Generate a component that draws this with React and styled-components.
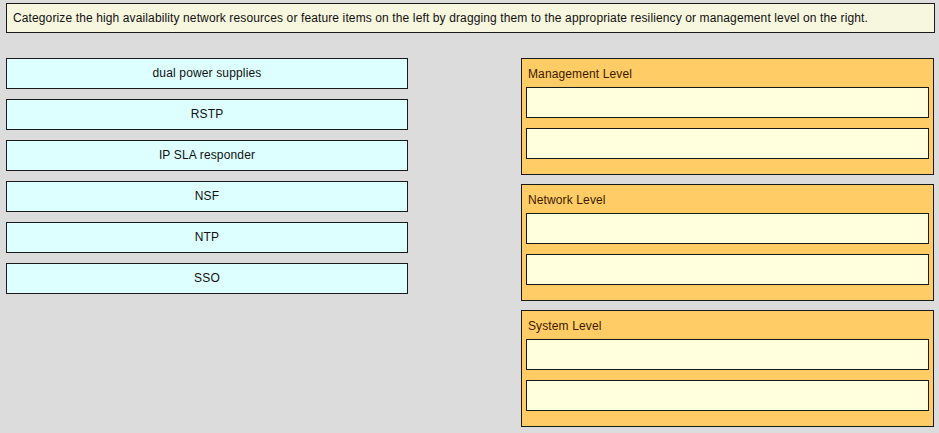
import React from "react";
import styled, { createGlobalStyle } from "styled-components";

const Global = createGlobalStyle`
  html, body { margin: 0; padding: 0; background: #dcdcdc; }
  body { font-family: "Liberation Sans", Arial, sans-serif; }
`;

const Page = styled.div`
  width: 939px;
  height: 433px;
  box-sizing: border-box;
  padding: 3px 5px 0 6px;
  background: #dcdcdc;
`;

const Instruction = styled.div`
  width: 929px;
  height: 30px;
  box-sizing: border-box;
  border: 1px solid #1a1a1a;
  background: #f7f6de;
  padding: 0 6px 1px 6px;
  display: flex;
  align-items: center;
  font-size: 12px;
  letter-spacing: 0.12px;
  color: #111;
`;

const Board = styled.div`
  display: flex;
  justify-content: space-between;
  align-items: flex-start;
  margin-top: 25px;
  width: 928px;
`;

const Items = styled.div`
  display: flex;
  flex-direction: column;
  gap: 10px;
  width: 402px;
`;

const Item = styled.div`
  height: 31px;
  box-sizing: border-box;
  border: 1px solid #1a1a1a;
  background: #ddffff;
  display: flex;
  align-items: center;
  justify-content: center;
  padding-bottom: 1px;
  font-size: 12px;
  letter-spacing: 0.15px;
  color: #111;
`;

const Levels = styled.div`
  display: flex;
  flex-direction: column;
  gap: 9px;
  width: 413px;
`;

const Level = styled.div`
  box-sizing: border-box;
  border: 1px solid #1a1a1a;
  background: #ffcc66;
  padding: 0 4px 15px 4px;
  display: flex;
  flex-direction: column;
  gap: 10px;
`;

const LevelTitle = styled.div`
  height: 28px;
  margin-bottom: -10px;
  display: flex;
  align-items: center;
  padding: 1px 0 0 2px;
  box-sizing: border-box;
  font-size: 12px;
  letter-spacing: 0.12px;
  color: #3a1a00;
`;

const Slot = styled.div`
  height: 31px;
  box-sizing: border-box;
  border: 1px solid #1a1a1a;
  background: #ffffdd;
`;

const items = ["dual power supplies", "RSTP", "IP SLA responder", "NSF", "NTP", "SSO"];
const levels = ["Management Level", "Network Level", "System Level"];

export default function App() {
  return (
    <Page>
      <Global />
      <Instruction>
        Categorize the high availability network resources or feature items on the left by dragging them to the appropriate resiliency or management level on the right.
      </Instruction>
      <Board>
        <Items>
          {items.map((t) => (
            <Item key={t}>{t}</Item>
          ))}
        </Items>
        <Levels>
          {levels.map((l) => (
            <Level key={l}>
              <LevelTitle>{l}</LevelTitle>
              <Slot />
              <Slot />
            </Level>
          ))}
        </Levels>
      </Board>
    </Page>
  );
}
